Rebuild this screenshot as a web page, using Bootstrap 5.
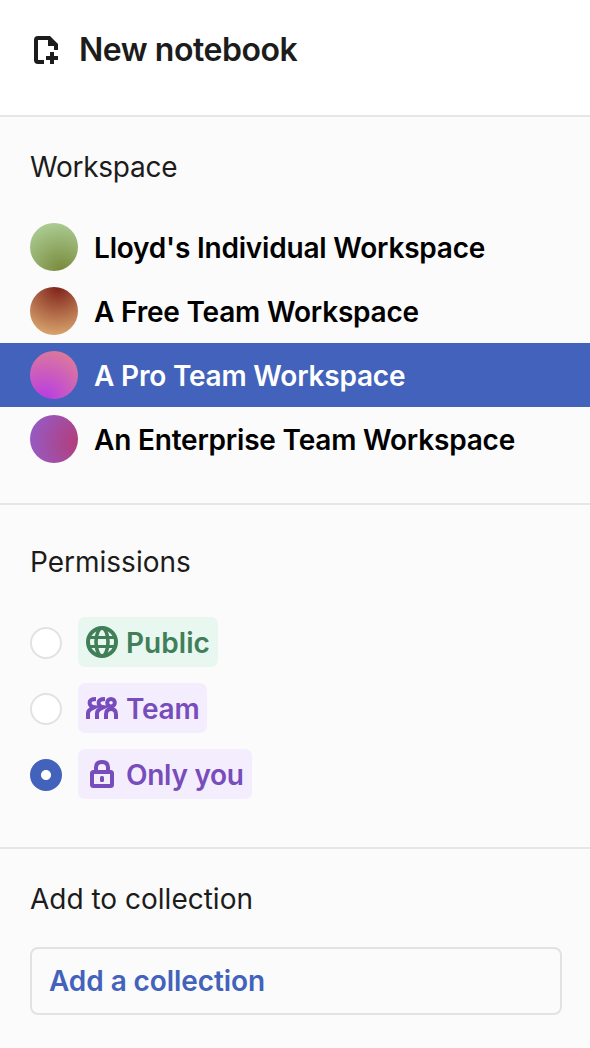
<!DOCTYPE html>
<html lang="en">
<head>
<meta charset="utf-8">
<meta name="viewport" content="width=device-width, initial-scale=1">
<title>New notebook</title>
<link href="https://cdn.jsdelivr.net/npm/bootstrap@5.3.0/dist/css/bootstrap.min.css" rel="stylesheet">
<style>
body{font-family:Inter,sans-serif;font-size:28px;line-height:34px;color:#1c1c1c;background:#fbfbfb;min-height:1048px;overflow:hidden}
svg{display:block;flex:none}
.head{height:117px;padding:33px 30px 0;border-bottom:2px solid #e6e6e6;gap:17px}
.head svg{margin-top:1px}
.head h1{font-size:32px;line-height:34px;font-weight:600;letter-spacing:-.45px}
.sect{padding-left:30px;padding-right:28px;border-bottom:2px solid #e6e6e6}
.sect h2{font-size:28px;line-height:34px;font-weight:400}
.spaces{height:388px;padding-top:33px}
.spaces h2{letter-spacing:-.25px}
.perms{height:344px;padding-top:40px}
.coll{padding-top:33px;border:0}
.list-group{margin:31px -28px 0 -30px}
.list-group .list-group-item{height:64px;margin:0!important;padding:0 30px;border:0;background:none;color:#000;font-weight:600;gap:16px;letter-spacing:-.2px}
.list-group .list-group-item.active{background:#4262bb;color:#fff}
.list-group-item span:last-child{padding-top:2px}
.avatar{width:48px;height:48px;flex:none}
.av1{background:radial-gradient(circle at 65% 100%,#78893b,#adcf97 90%)}
.av2{background:radial-gradient(circle at 58% 0,#7f2119,#dba870 90%)}
.av3{background:radial-gradient(circle at 30% 100%,#b83be6,#de7c97 90%)}
.av4{background:radial-gradient(circle at 100% 58%,#b33d78,#955bc5 90%)}
.options{margin-top:38px;gap:16px}
.form-check-input.dot{width:32px;height:32px;margin:2px 0 0;border:2px solid #e2e2e2;background-color:#fff;flex:none}
.form-check-input.dot:checked{background:radial-gradient(circle,#fff 4.6px,#4262bb 5.4px);border-color:#4262bb;background-origin:border-box}
.tag{height:50px;padding:0 8px;gap:8px;border-radius:7px;font-weight:600}
.tag span{padding-top:2px;letter-spacing:-.27px}
.tag.pub span{letter-spacing:.05px}
.pub{background:#e8f7ef;color:#417f58}
.priv{background:#f4edfd;color:#774cbb}
.add{height:68px;margin-top:31px;border:2px solid #e2e2e2!important;border-radius:8px;padding:0 17px;color:#4262bb!important;font-size:28px;font-weight:600;letter-spacing:-.08px;text-align:left}
</style>
</head>
<body>
<header class="head d-flex align-items-start bg-white">
<svg width="32" height="32" viewBox="0 0 32 32"><path fill="currentColor" d="M8 2h12l8 8v6h-4v-4h-6V6H8v20h6v4H8q-4 0-4-4V6q0-4 4-4zM20 18h4v4h4v4h-4v4h-4v-4h-4v-4h4z"/></svg>
<h1 class="mb-0">New notebook</h1>
</header>
<section class="sect spaces">
<h2 class="mb-0">Workspace</h2>
<div class="list-group list-group-flush">
<a class="list-group-item d-flex align-items-center"><span class="avatar av1 rounded-circle"></span><span>Lloyd's Individual Workspace</span></a>
<a class="list-group-item d-flex align-items-center"><span class="avatar av2 rounded-circle"></span><span>A Free Team Workspace</span></a>
<a class="list-group-item active d-flex align-items-center"><span class="avatar av3 rounded-circle"></span><span>A Pro Team Workspace</span></a>
<a class="list-group-item d-flex align-items-center"><span class="avatar av4 rounded-circle"></span><span>An Enterprise Team Workspace</span></a>
</div>
</section>
<section class="sect perms">
<h2 class="mb-0">Permissions</h2>
<div class="options d-flex flex-column">
<label class="d-flex align-items-center gap-3"><input class="form-check-input dot" type="radio" name="perm"><span class="tag pub d-flex align-items-center"><svg width="32" height="32" viewBox="0 0 32 32" fill="none" stroke="currentColor" stroke-width="4"><circle cx="16" cy="16" r="14"/><ellipse cx="16" cy="16" rx="6" ry="14" stroke-width="3.6"/><path d="M3 11.5h26M3 20.5h26" stroke-width="3"/></svg><span>Public</span></span></label>
<label class="d-flex align-items-center gap-3"><input class="form-check-input dot" type="radio" name="perm"><span class="tag priv d-flex align-items-center"><svg width="32" height="32" viewBox="0 0 32 32" fill="none" stroke="currentColor" stroke-width="4"><path id="side" d="M2 27v-5.500Q2 18.500 5 17L8.800 15.200Q3.600 14.500 3.600 10.700Q3.600 7 10 7"/><use href="#side" x="9"/><path d="M20 27v-4.500q0-5.500 5-5.500t5 5.500V27"/><circle cx="25" cy="10.700" r="3.800"/></svg><span>Team</span></span></label>
<label class="d-flex align-items-center gap-3"><input class="form-check-input dot" type="radio" name="perm" checked><span class="tag priv d-flex align-items-center"><svg width="32" height="32" viewBox="0 0 32 32" fill="none" stroke="currentColor" stroke-width="4"><rect x="6" y="14" width="20" height="14" rx="1.5"/><path d="M10 13V9.500q0-5.500 6-5.500t6 5.500V13"/><rect x="14" y="18" width="4" height="6" rx="1.5" fill="currentColor" stroke="none"/></svg><span>Only you</span></span></label>
</div>
</section>
<section class="sect coll">
<h2 class="mb-0">Add to collection</h2>
<button class="add btn d-block w-100">Add a collection</button>
</section>
<script src="https://cdn.jsdelivr.net/npm/bootstrap@5.3.0/dist/js/bootstrap.bundle.min.js"></script>
</body>
</html>
